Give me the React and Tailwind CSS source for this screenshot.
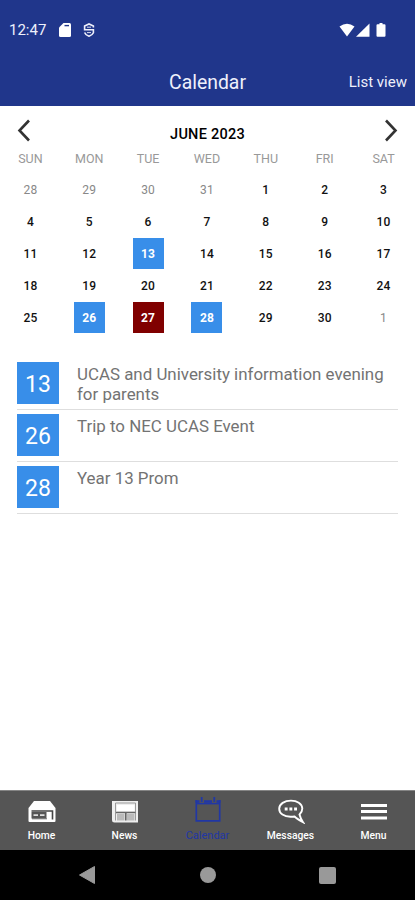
import React from 'react';

const weekDays = ['SUN', 'MON', 'TUE', 'WED', 'THU', 'FRI', 'SAT'];

// 28 May - 1 July
const days = [28, 29, 30, 31, ...Array.from({ length: 30 }, (_, i) => i + 1), 1].map((day, index) => ({
  day,
  outside: index < 4 || index > 33,
}));

const today = 27;

const events = [
  { day: 13, title: 'UCAS and University information evening for parents' },
  { day: 26, title: 'Trip to NEC UCAS Event' },
  { day: 28, title: 'Year 13 Prom' },
];

const tabs = [
  { label: 'Home', icon: HomeIcon },
  { label: 'News', icon: NewsIcon },
  { label: 'Calendar', icon: CalendarIcon, active: true },
  { label: 'Messages', icon: MessagesIcon },
  { label: 'Menu', icon: MenuIcon },
];

function App() {
  return (
    <div className="flex h-[900px] w-[415px] flex-col overflow-hidden bg-white font-['Roboto',sans-serif]">
      <Header />
      <main className="flex-1">
        <MonthView />
        <EventList />
      </main>
      <TabBar />
      <SystemNav />
    </div>
  );
}

function Header() {
  return (
    <header className="h-[106px] bg-[#20368b] text-[#eef0fb]">
      {/* Status bar */}
      <div className="flex h-[60px] items-center justify-between pl-[9px] pr-[28px]">
        <div className="flex items-center">
          <span className="w-[50px] text-[15px]">12:47</span>
          <svg className="h-[14px] w-[12px]" viewBox="0 0 12 14">
            <path d="M4.5 0H10.5Q12 0 12 1.5V12.5Q12 14 10.5 14H1.5Q0 14 0 12.5V4.5Z" fill="#fff" />
            <path d="M5.5 2.6h4.5" stroke="#20368b" strokeWidth="1.4" />
          </svg>
          <svg className="ml-[12px] h-[14px] w-[12px]" viewBox="0 0 12 14" fill="none" stroke="currentColor" strokeWidth="1.6">
            <path d="M10.4 4.4V3L6 1 1.6 3v3.8h8.8V9.8Q9.5 12 6 13.2 2.5 12 1.6 9.4" />
            <path d="M4 4.2h4M4 9.6h4" strokeWidth="0.9" />
          </svg>
        </div>
        <svg className="h-[14px] w-[48px]" viewBox="0 0 48 14" fill="#fff">
          <path d="M0.5 3.6Q8-2.2 15.5 3.6L8 13.5Z" />
          <path d="M30.5 0.5V13.7H17Z" />
          <path d="M40.5 0h3v1.3h2q1 0 1 1v10.4q0 1-1 1h-7q-1 0-1-1V2.3q0-1 1-1h2Z" />
        </svg>
      </div>
      <div className="grid h-[45px] grid-cols-[1fr_auto_1fr] items-center pr-[8px] pl-[8px]">
        <span />
        <h1 className="pt-[1px] text-[19.4px]">Calendar</h1>
        <button className="justify-self-end text-[15px]">List view</button>
      </div>
    </header>
  );
}

function MonthView() {
  return (
    <section className="mr-[2px] ml-[1px]">
      <div className="flex h-[43px] items-start justify-between pt-[13px] pr-[15px] pl-[16px]">
        <svg className="h-[24px] w-[14px]" viewBox="0 0 14 24" fill="none" stroke="#333" strokeWidth="2.6">
          <path d="M12 1.5 2.5 11.5 12 21.5" />
        </svg>
        <h2 className="pt-[6px] text-[14.5px] leading-[20px] font-medium tracking-[0.25px] text-black">JUNE 2023</h2>
        <svg className="h-[24px] w-[14px]" viewBox="0 0 14 24" fill="none" stroke="#333" strokeWidth="2.6">
          <path d="M2 1.5 11.5 11.5 2 21.5" />
        </svg>
      </div>
      <div className="grid h-[24px] grid-cols-7 text-center text-[12.5px] leading-[20px] text-[#999]">
        {weekDays.map((name) => (
          <span key={name}>{name}</span>
        ))}
      </div>
      <div className="grid h-[161px] grid-cols-7 grid-rows-5">
        {days.map((item, index) => (
          <DayCell key={index} {...item} />
        ))}
      </div>
    </section>
  );
}

function DayCell({ day, outside }) {
  const hasEvent = !outside && events.some((event) => event.day === day);
  return (
    <div className="flex items-center justify-center">
      <span className={`flex h-[31px] w-[31px] items-center justify-center pt-[1px] text-[12px] tracking-[0.2px] ${getDayStyle(day, outside, hasEvent)}`}>
        {day}
      </span>
    </div>
  );
}

function getDayStyle(day, outside, hasEvent) {
  if (outside) return 'text-[#888]';
  if (day === today) return 'bg-[#800000] font-bold text-white';
  if (hasEvent) return 'bg-[#388ee9] font-bold text-white';
  return 'font-medium text-[#111]';
}

function EventList() {
  return (
    <ul className="mr-[17px] ml-[17px] pt-[24px]">
      {events.map((event) => (
        <li key={event.day} className="flex h-[52px] border-b border-[#dedede] pt-[4px]">
          <div className="flex h-[42px] w-[42px] shrink-0 items-center justify-center bg-[#388ee9] pt-[4px] text-[23px] text-white">
            {event.day}
          </div>
          <p className="ml-[18px] pt-[2px] text-[16.9px] leading-[20px] text-[#737373]">{event.title}</p>
        </li>
      ))}
    </ul>
  );
}

function TabBar() {
  return (
    <nav className="grid h-[60px] grid-cols-5 border-t border-[#858585] bg-[#555]">
      {tabs.map(({ label, icon: Icon, active }) => (
        <button
          key={label}
          className={`flex flex-col items-center justify-start pt-[5px] ${active ? 'text-[#2137a5]' : 'text-white'}`}
        >
          <Icon />
          <span className={`mt-[5px] leading-[14px] ${active ? 'text-[11px]' : 'text-[10.3px] font-medium'}`}>{label}</span>
        </button>
      ))}
    </nav>
  );
}

function HomeIcon() {
  return (
    <svg className="h-[28px] w-[28px]" viewBox="0 0 28 28">
      <path d="M6 5H22L27.5 12V25Q27.5 26 26.5 26H1.5Q0.5 26 0.5 25V12Z" fill="currentColor" />
      <path d="M3.5 15H24.5V23.5" fill="none" stroke="#444" strokeWidth="1.6" />
      <path d="M3.5 16H18.5V22.5H3.5Z" fill="#555" />
      <path d="M5.5 19.2H10M12 19.2H16.5" stroke="#ddd" strokeWidth="1.8" />
      <path d="M4 22.8H19" stroke="#555" strokeWidth="0.8" />
    </svg>
  );
}

function NewsIcon() {
  return (
    <svg className="h-[28px] w-[28px]" viewBox="0 0 28 28" fill="none">
      <path d="M1 5H27V26.5H3.5Q1 26.5 1 24Z" fill="#eee" />
      <path d="M4.5 7V24.5M4.5 7H24.5V24.5" stroke="#999" strokeWidth="1" />
      <path d="M6 9H23.5V15H6Z" fill="#fff" />
      <path d="M6 18H13.5V24.5H6ZM16 18H23.5V24.5H16Z" fill="#bbb" />
      <path d="M5 16.5H24.5M14.8 16.5V24.5" stroke="#666" strokeWidth="1.6" />
    </svg>
  );
}

function CalendarIcon() {
  return (
    <svg className="h-[28px] w-[28px]" viewBox="0 0 28 28" fill="none" stroke="currentColor">
      <path d="M2.3 4V24.8H25.7V4" strokeWidth="1.7" />
      <path d="M1.5 5.5H5.5M10 5.5H18M22.5 5.5H26.5" strokeWidth="2.4" />
      <path d="M2 7.6H26" strokeWidth="1.6" />
      <path d="M7.7 1V6M20.3 1V6" strokeWidth="1.8" />
    </svg>
  );
}

function MessagesIcon() {
  return (
    <svg className="h-[28px] w-[28px]" viewBox="0 0 28 28" fill="none" stroke="currentColor" strokeWidth="1.9">
      <path d="M17.5 20.5Q20 23 26 26.2Q23.3 22 22.5 18.5Q25.3 16 25.3 12.5C25 7.5 20 4.6 14 4.6C7.5 4.6 2.2 8 2.2 12.8C2.2 17.5 7 20.8 13.5 20.8Q16 20.8 17.5 20.5Z" />
      <path d="M7.7 13H10.6M12.4 13H15.3M17.1 13H20" strokeWidth="2.8" />
    </svg>
  );
}

function MenuIcon() {
  return (
    <svg className="h-[28px] w-[28px]" viewBox="0 0 28 28" stroke="currentColor" strokeWidth="3">
      <path d="M1 9.5H27M1 15.5H27M1 22H27" />
    </svg>
  );
}

// Android back / home / recents keys
function SystemNav() {
  return (
    <div className="flex h-[50px] items-center justify-between bg-black pr-[79px] pl-[79px] text-[#999]">
      <svg className="h-[18px] w-[17px]" viewBox="0 0 17 18" fill="currentColor">
        <path d="M15.5 0.5V17.5L0.5 9Z" stroke="currentColor" strokeLinejoin="round" />
      </svg>
      <div className="h-[16px] w-[16px] rounded-full bg-[#999]" />
      <div className="h-[17px] w-[17px] rounded-[2px] bg-[#999]" />
    </div>
  );
}

export default App;
